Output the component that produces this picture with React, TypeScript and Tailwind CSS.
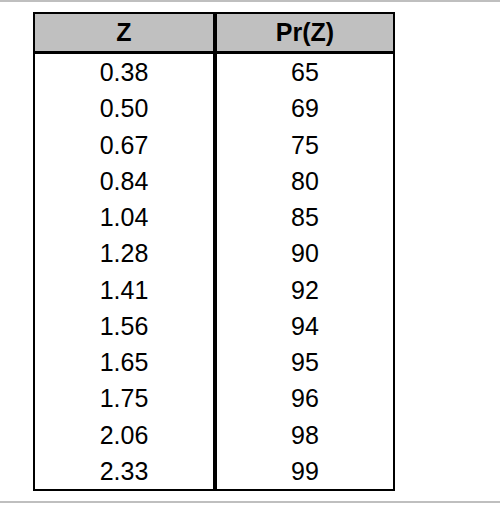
const rows: [string, string][] = [
  ['0.38', '65'],
  ['0.50', '69'],
  ['0.67', '75'],
  ['0.84', '80'],
  ['1.04', '85'],
  ['1.28', '90'],
  ['1.41', '92'],
  ['1.56', '94'],
  ['1.65', '95'],
  ['1.75', '96'],
  ['2.06', '98'],
  ['2.33', '99'],
]

export default function App() {
  return (
    <div className="w-[500px] h-[532px] bg-white text-black font-['Liberation_Sans',Arial,sans-serif]">
      <div className="h-[2px] bg-[#bfbfbf]" />

      <div className="mt-[10px] ml-[33px] w-[362px] border-2 border-black">
        <div className="grid grid-cols-[182px_176px] h-[40px] bg-[#c0c0c0] border-b-[3px] border-black text-[25px] font-bold">
          <div className="flex items-center justify-center border-r-4 border-black">Z</div>
          <div className="flex items-center justify-center">Pr(Z)</div>
        </div>
        {rows.map(([z, p]) => (
          <div key={z} className="grid grid-cols-[182px_176px] h-[36.25px] text-[25px]">
            <div className="flex items-center justify-center border-r-4 border-black">{z}</div>
            <div className="flex items-center justify-center">{p}</div>
          </div>
        ))}
      </div>

      <div className="mt-[10px] h-[2px] bg-[#bfbfbf]" />
    </div>
  )
}
